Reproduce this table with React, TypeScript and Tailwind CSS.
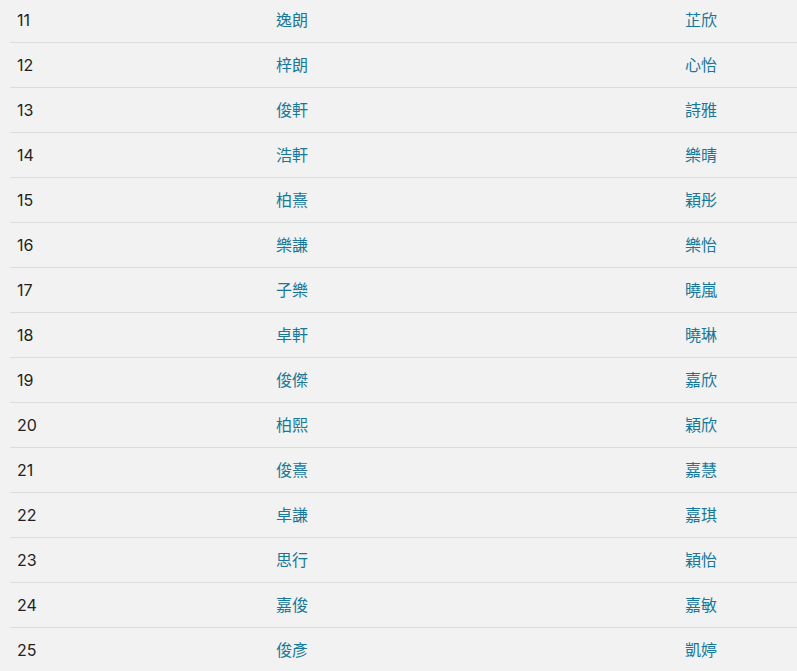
const rows: [number, string, string][] = [
  [11, "逸朗", "芷欣"],
  [12, "梓朗", "心怡"],
  [13, "俊軒", "詩雅"],
  [14, "浩軒", "樂晴"],
  [15, "柏熹", "穎彤"],
  [16, "樂謙", "樂怡"],
  [17, "子樂", "曉嵐"],
  [18, "卓軒", "曉琳"],
  [19, "俊傑", "嘉欣"],
  [20, "柏熙", "穎欣"],
  [21, "俊熹", "嘉慧"],
  [22, "卓謙", "嘉琪"],
  [23, "思行", "穎怡"],
  [24, "嘉俊", "嘉敏"],
  [25, "俊彥", "凱婷"],
];

export default function App() {
  return (
    <div
      className="h-[671px] overflow-hidden bg-[#f2f2f2] pl-[10px] text-[16px] leading-[20px]"
      style={{ fontFamily: 'Inter, "Noto Sans CJK TC", sans-serif' }}
    >
      <div className="-mt-[2px] flex flex-col">
        {rows.map(([n, boy, girl]) => (
          <div
            key={n}
            className="grid grid-cols-[259px_409px_1fr] border-b border-[#dcdcdc] py-[12px]"
          >
            <span className="px-[7px] text-[#222222]">{n}</span>
            <span className="px-[7px] text-[#17789a]">{boy}</span>
            <span className="px-[7px] text-[#17789a]">{girl}</span>
          </div>
        ))}
      </div>
    </div>
  );
}
